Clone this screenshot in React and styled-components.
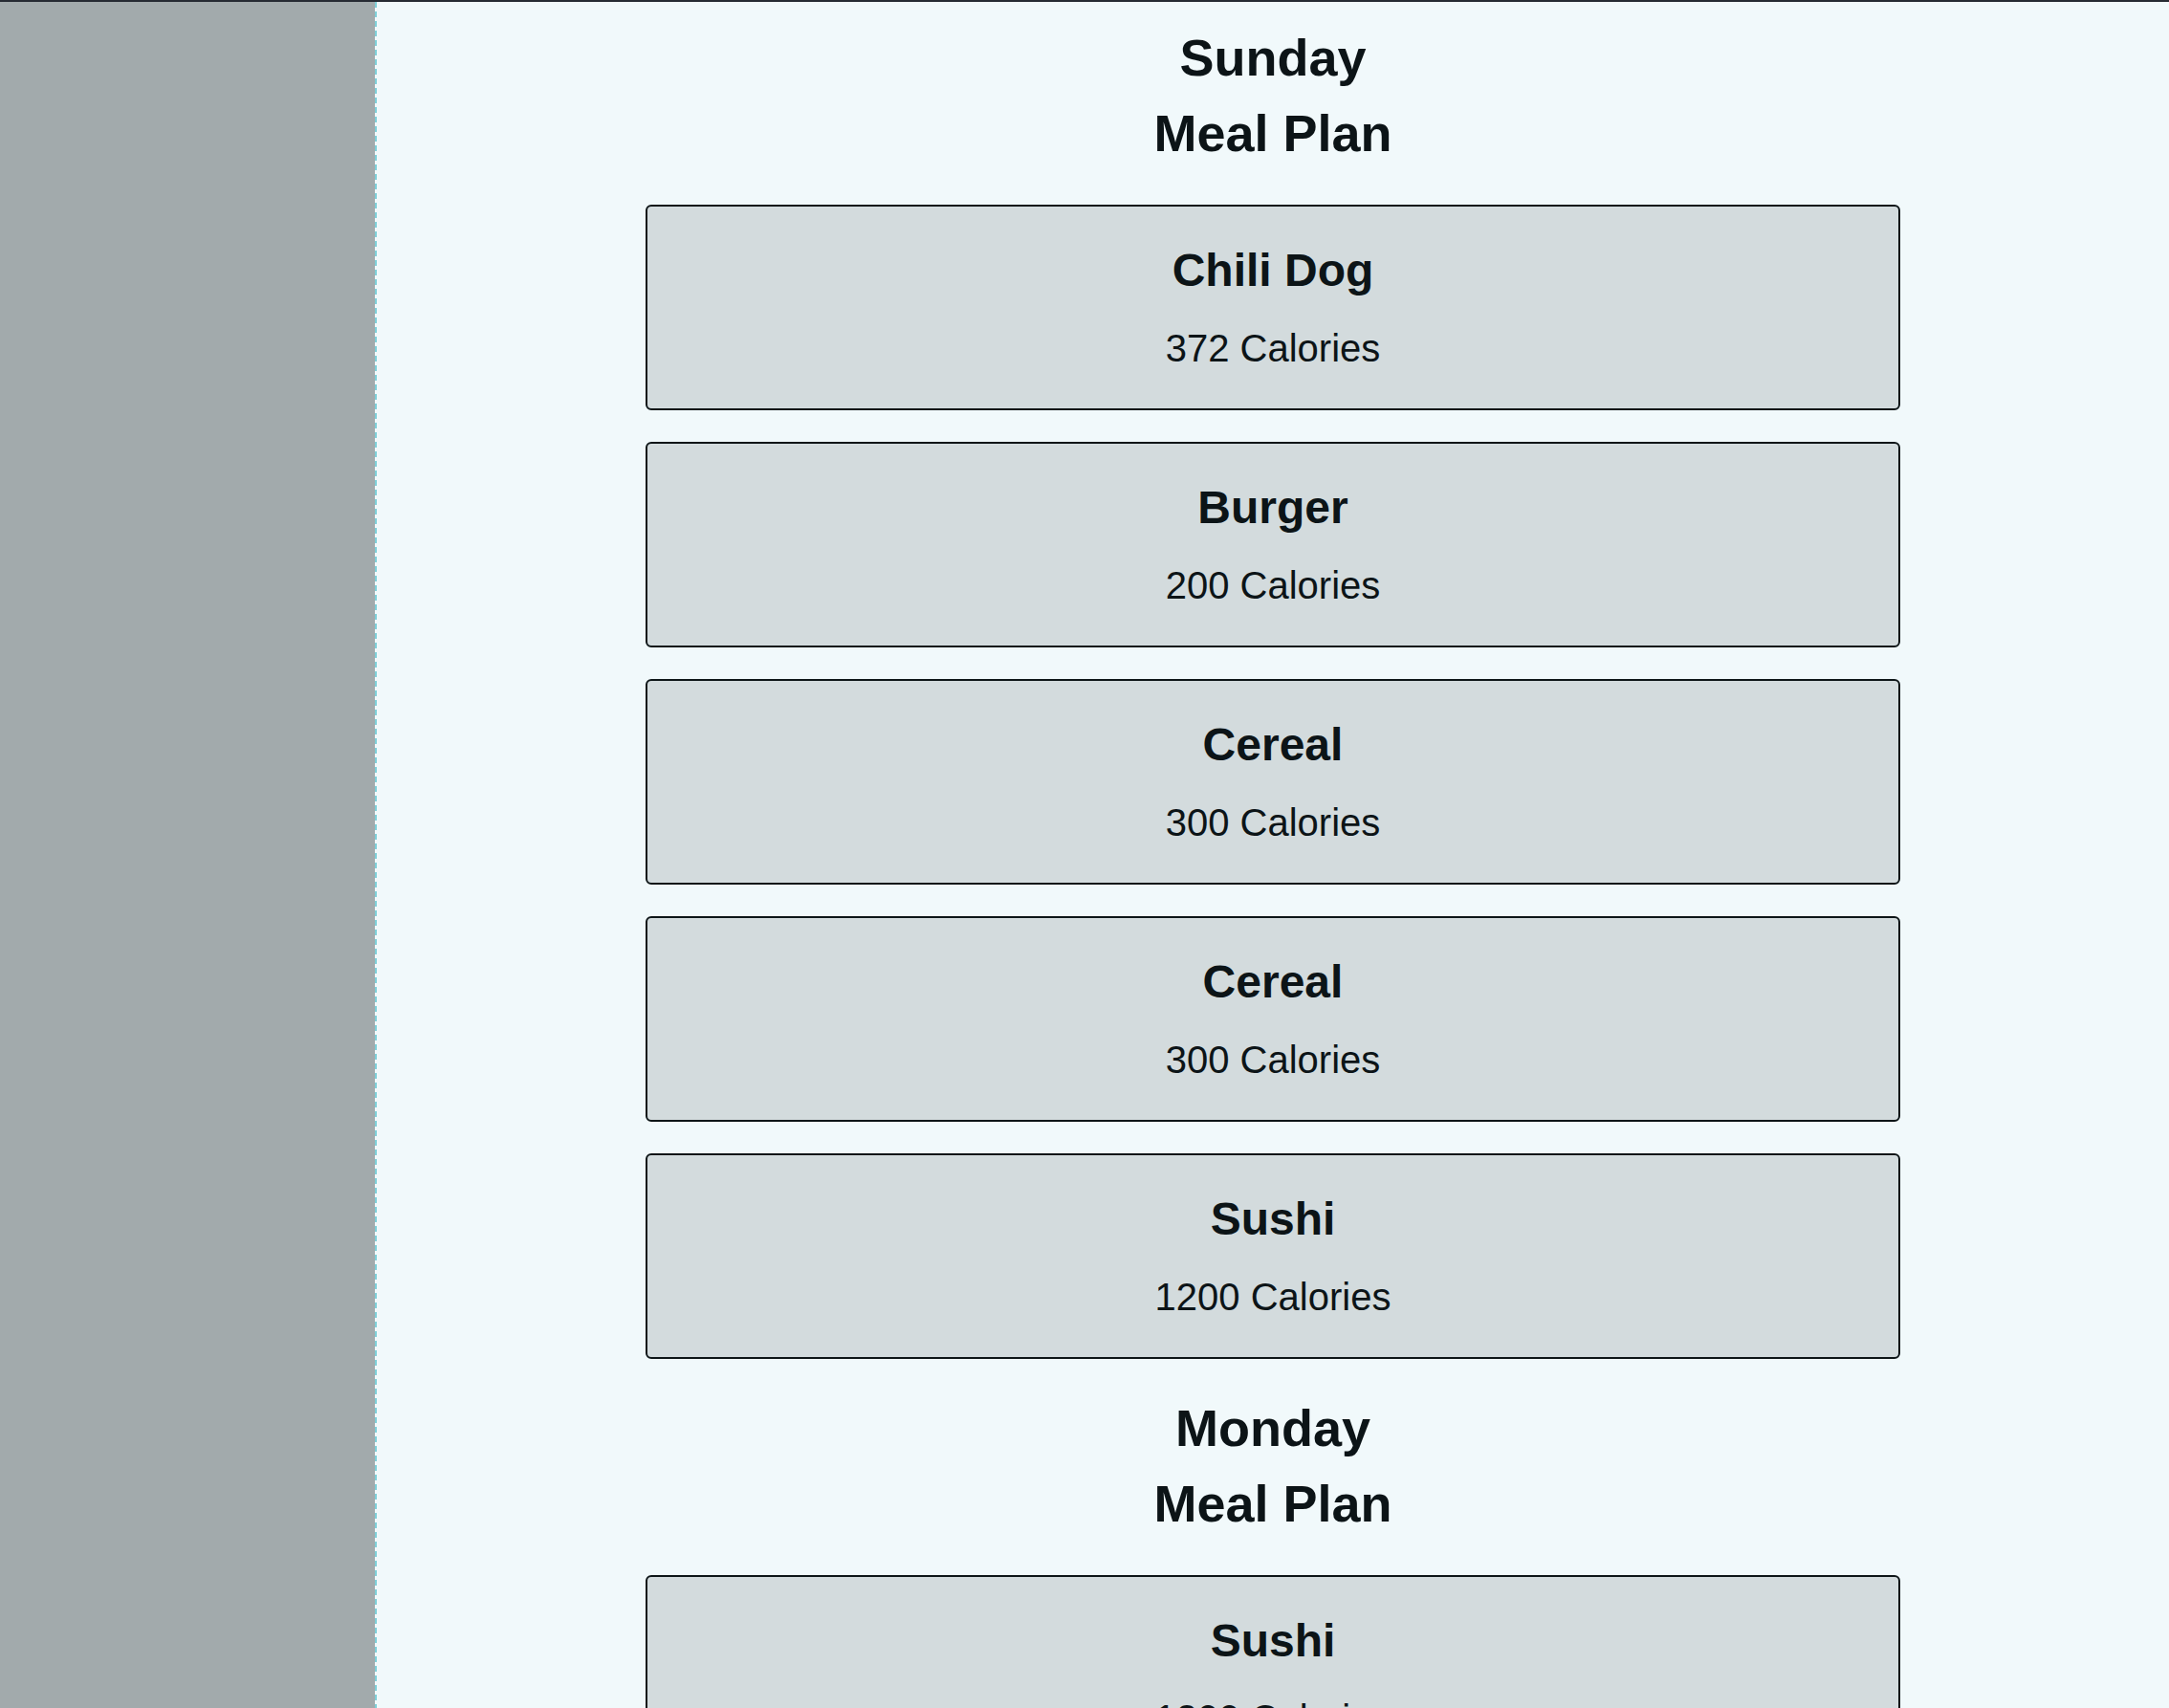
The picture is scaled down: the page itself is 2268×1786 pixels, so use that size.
import React from "react";
import styled, { createGlobalStyle } from "styled-components";

const GlobalStyle = createGlobalStyle`
  html, body {
    margin: 0;
    padding: 0;
    height: 100%;
  }
  body {
    font-family: "Liberation Sans", Arial, Helvetica, sans-serif;
    color: #0c1417;
    background: #f1f9fb;
    overflow: hidden;
  }
  #root {
    min-height: 100%;
  }
`;

const Shell = styled.div`
  display: flex;
  min-height: 100vh;
  border-top: 2px solid #262b33;
  box-sizing: border-box;
`;

const Sidebar = styled.aside`
  flex: 0 0 392px;
  background: #a2aaac;
`;

const Main = styled.main`
  flex: 1;
  background: #f1f9fb;
  border-left: 2px dashed #7fcfd8;
  padding: 19px 0 40px;
  display: flex;
  flex-direction: column;
  align-items: center;
  gap: 33px;
`;

const DaySection = styled.section`
  width: 100%;
  display: flex;
  flex-direction: column;
  align-items: center;
`;

const DayTitle = styled.h2`
  margin: 0 0 35px;
  font-size: 54px;
  line-height: 79px;
  font-weight: 700;
  text-align: center;
`;

const MealList = styled.div`
  width: 70%;
  display: flex;
  flex-direction: column;
  gap: 33px;
`;

const MealCard = styled.div`
  background: #d3dbdd;
  border: 2px solid #0d1517;
  border-radius: 6px;
  padding: 39px 20px 40px;
  display: flex;
  flex-direction: column;
  align-items: center;
  gap: 31px;
`;

const MealName = styled.h3`
  margin: 0;
  font-size: 48px;
  line-height: 55px;
  font-weight: 700;
`;

const MealCalories = styled.p`
  margin: 0;
  font-size: 40px;
  line-height: 46px;
  font-weight: 400;
`;

const plan = [
  {
    day: "Sunday",
    meals: [
      { name: "Chili Dog", calories: 372 },
      { name: "Burger", calories: 200 },
      { name: "Cereal", calories: 300 },
      { name: "Cereal", calories: 300 },
      { name: "Sushi", calories: 1200 },
    ],
  },
  {
    day: "Monday",
    meals: [
      { name: "Sushi", calories: 1200 },
      { name: "Burger", calories: 200 },
      { name: "Cereal", calories: 300 },
    ],
  },
];

export default function App() {
  return (
    <>
      <GlobalStyle />
      <Shell>
        <Sidebar />
        <Main>
          {plan.map((d) => (
            <DaySection key={d.day}>
              <DayTitle>
                {d.day}
                <br />
                Meal Plan
              </DayTitle>
              <MealList>
                {d.meals.map((m, i) => (
                  <MealCard key={i}>
                    <MealName>{m.name}</MealName>
                    <MealCalories>{m.calories} Calories</MealCalories>
                  </MealCard>
                ))}
              </MealList>
            </DaySection>
          ))}
        </Main>
      </Shell>
    </>
  );
}
